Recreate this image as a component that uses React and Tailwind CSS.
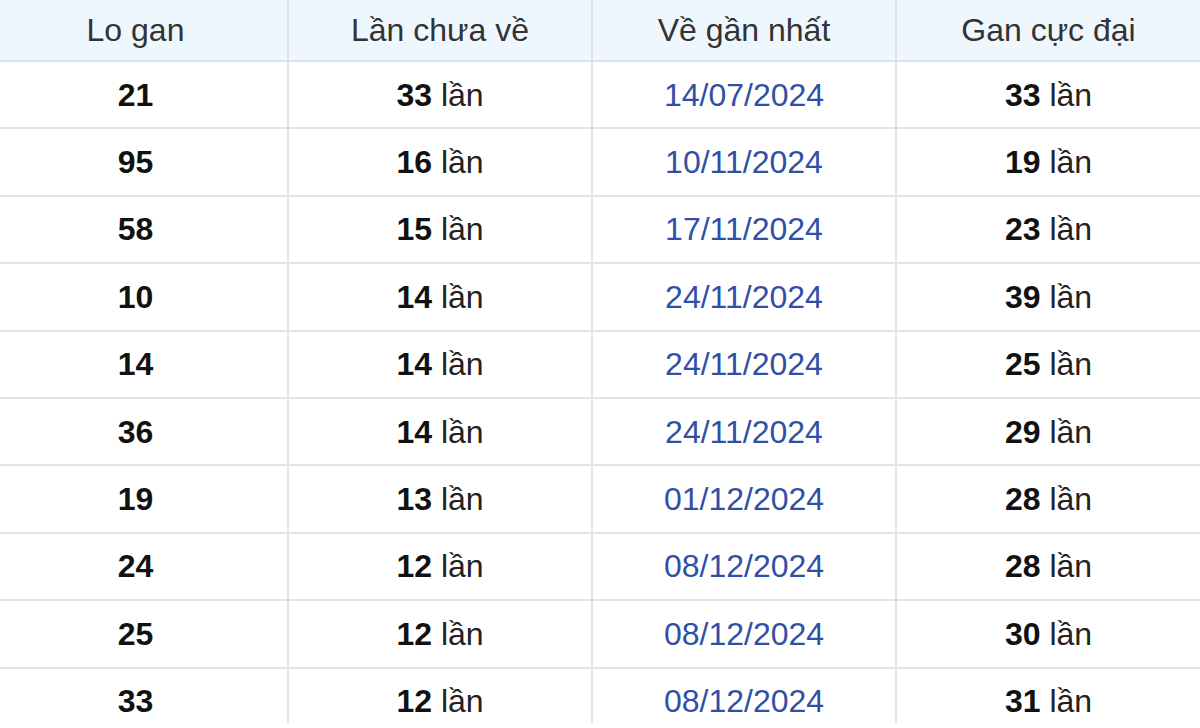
import React from 'react';

const rows = [
    { so: '21', chua: '33', gan: '14/07/2024', max: '33' },
    { so: '95', chua: '16', gan: '10/11/2024', max: '19' },
    { so: '58', chua: '15', gan: '17/11/2024', max: '23' },
    { so: '10', chua: '14', gan: '24/11/2024', max: '39' },
    { so: '14', chua: '14', gan: '24/11/2024', max: '25' },
    { so: '36', chua: '14', gan: '24/11/2024', max: '29' },
    { so: '19', chua: '13', gan: '01/12/2024', max: '28' },
    { so: '24', chua: '12', gan: '08/12/2024', max: '28' },
    { so: '25', chua: '12', gan: '08/12/2024', max: '30' },
    { so: '33', chua: '12', gan: '08/12/2024', max: '31' },
];

const headers = ['Lo gan', 'Lần chưa về', 'Về gần nhất', 'Gan cực đại'];

const App = () => {
    return (
        <div className="w-[1200px] h-[728px] overflow-hidden bg-white" style={{ fontFamily: '"Liberation Sans", Arial, sans-serif' }}>
            <div className="ml-[-16px] w-[1216px] h-[723px] overflow-hidden">
                <div className="grid grid-cols-[305px_304px_304px_303px] bg-[#eef7fe] text-[32px] text-[#333]">
                    {headers.map((h, i) => (
                        <div
                            key={h}
                            className={`h-[62px] flex items-center justify-center border-b-2 border-[#dfe3e8] ${i < 3 ? 'border-r-2' : ''}`}
                        >
                            {h}
                        </div>
                    ))}
                </div>
                {rows.map((r, idx) => (
                    <div key={idx} className="grid grid-cols-[305px_304px_304px_303px] text-[32px]">
                        <div className="h-[67.4px] flex items-center justify-center border-b-2 border-r-2 border-[#e3e3e3] font-bold text-[#111]">
                            {r.so}
                        </div>
                        <div className="h-[67.4px] flex items-center justify-center border-b-2 border-r-2 border-[#e3e3e3] text-[#222]">
                            <span className="font-bold text-[#111]">{r.chua}</span>&nbsp;lần
                        </div>
                        <div className="h-[67.4px] flex items-center justify-center border-b-2 border-r-2 border-[#e3e3e3] text-[#3050a6]">
                            {r.gan}
                        </div>
                        <div className="h-[67.4px] flex items-center justify-center border-b-2 border-[#e3e3e3] text-[#222]">
                            <span className="font-bold text-[#111]">{r.max}</span>&nbsp;lần
                        </div>
                    </div>
                ))}
            </div>
        </div>
    );
};

export default App;
